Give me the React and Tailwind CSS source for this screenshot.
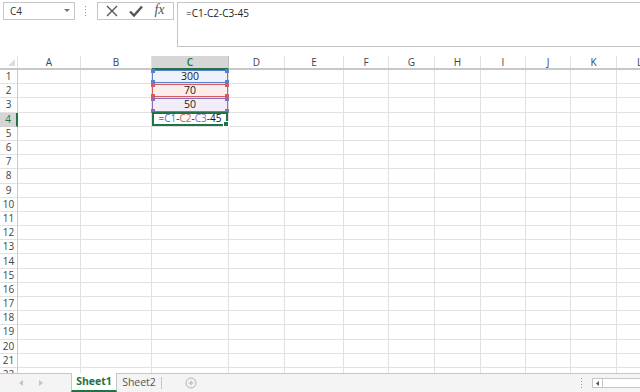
import React from "react";

const COLS = [
  { l: "A", w: 63 },
  { l: "B", w: 71 },
  { l: "C", w: 77 },
  { l: "D", w: 56 },
  { l: "E", w: 59 },
  { l: "F", w: 45 },
  { l: "G", w: 46 },
  { l: "H", w: 46 },
  { l: "I", w: 45 },
  { l: "J", w: 45 },
  { l: "K", w: 46 },
  { l: "L", w: 46 },
];

const ROWS = Array.from({ length: 22 }, (_, i) => i + 1);

const font = { fontFamily: '"Open Sans", "Liberation Sans", sans-serif' };

// coloured reference range on a cell, with small squares at the corners
const RefBox = ({ color, fill, children }) => (
  <div
    className="relative h-full w-full flex items-center justify-center border"
    style={{ borderColor: color, background: fill }}
  >
    {children}
    <span className="absolute -left-[2px] -top-[2px] w-[4px] h-[4px]" style={{ background: color }} />
    <span className="absolute -right-[2px] -top-[2px] w-[4px] h-[4px]" style={{ background: color }} />
    <span className="absolute -left-[2px] -bottom-[2px] w-[4px] h-[4px]" style={{ background: color }} />
    <span className="absolute -right-[2px] -bottom-[2px] w-[4px] h-[4px]" style={{ background: color }} />
  </div>
);

const CellContent = ({ r, c }) => {
  if (c !== "C") return null;
  if (r === 1)
    return (
      <RefBox color="#5b7fd0" fill="#eef2fb">
        300
      </RefBox>
    );
  if (r === 2)
    return (
      <RefBox color="#d55c5c" fill="#fcecec">
        70
      </RefBox>
    );
  if (r === 3)
    return (
      <RefBox color="#8d6bbd" fill="#f2eef8">
        50
      </RefBox>
    );
  if (r === 4)
    return (
      <div className="relative h-[calc(100%+1px)] w-full flex items-center justify-center border-2 border-[#217346] -mt-[1px] text-[10px] text-[#111]">
        <span>=</span>
        <span className="text-[#4a72c9]">C1</span>
        <span>-</span>
        <span className="text-[#cf5b5b]">C2</span>
        <span>-</span>
        <span className="text-[#8b69bb]">C3</span>
        <span>-45</span>
        <span className="absolute -right-[3px] -bottom-[3px] w-[4px] h-[4px] bg-[#217346] border border-white box-content" />
      </div>
    );
  return null;
};

export default function App() {
  return (
    <div className="w-[640px] h-[392px] bg-white flex flex-col overflow-hidden text-[#222]" style={font}>
      {/* formula bar area */}
      <div className="h-[56px] flex items-start shrink-0">
        <div className="mt-[2px] ml-[3px] w-[72px] h-[18px] border border-[#c6c6c6] flex items-center justify-between pl-[6px] pr-[4px] text-[10px] text-[#333]">
          <span>C4</span>
          <svg width="6" height="4" viewBox="0 0 6 4">
            <path d="M0 0 L6 0 L3 3 Z" fill="#777" />
          </svg>
        </div>
        <div className="ml-[10px] mt-[6px] flex flex-col gap-[2px]">
          <span className="w-[1px] h-[1px] bg-[#999]" />
          <span className="w-[1px] h-[1px] bg-[#999]" />
          <span className="w-[1px] h-[1px] bg-[#999]" />
          <span className="w-[1px] h-[1px] bg-[#999]" />
        </div>
        <div className="mt-[2px] ml-[11px] w-[77px] h-[18px] border border-[#c6c6c6] flex items-center justify-around px-[3px]">
          <svg width="12" height="12" viewBox="0 0 12 12">
            <path d="M1 1 L11 11 M11 1 L1 11" stroke="#555" strokeWidth="1.4" />
          </svg>
          <svg width="14" height="12" viewBox="0 0 14 12">
            <path d="M1 6.5 L5 10.5 L13 1.5" stroke="#555" strokeWidth="2.4" fill="none" />
          </svg>
          <span
            className="text-[14px] italic text-[#555] leading-none -mt-[2px]"
            style={{ fontFamily: '"Liberation Serif", serif' }}
          >
            fx
          </span>
        </div>
        <div className="mt-[2px] ml-[3px] flex-1 h-[45px] border border-[#c6c6c6] border-r-0 pl-[8px] pt-[3px] text-[10px] text-[#222]">
          =C1-C2-C3-45
        </div>
      </div>

      {/* grid */}
      <div className="flex-1 overflow-hidden text-[10px]">
        {/* header row */}
        <div className="flex h-[14px] border-b-[2px] border-[#c8c8c8]">
          <div className="w-[18px] shrink-0 flex items-end justify-end pr-[2px] pb-[2px] border-r border-[#e1e1e1]">
            <svg width="7" height="7" viewBox="0 0 7 7">
              <path d="M7 0 L7 7 L0 7 Z" fill="#dcdcdc" />
            </svg>
          </div>
          {COLS.map((c) => (
            <div
              key={c.l}
              className={
                c.l === "C"
                  ? "shrink-0 flex items-center justify-center bg-[#d6d6d6] text-[#217346] font-semibold border-b-[2px] border-[#217346] -mb-[2px] border-r border-r-[#bdbdbd]"
                  : "shrink-0 flex items-center justify-center text-[#444] border-r border-[#e1e1e1]"
              }
              style={{ width: c.w }}
            >
              {c.l}
            </div>
          ))}
        </div>
        {ROWS.map((r) => (
          <div key={r} className="flex h-[14.2px]">
            <div
              className={
                r === 4
                  ? "w-[18px] shrink-0 flex items-center justify-center bg-[#d6d6d6] text-[#217346] border-r-[2px] border-[#217346] border-b border-b-[#d0d0d0]"
                  : "w-[18px] shrink-0 flex items-center justify-center text-[#444] border-r border-[#c8c8c8] border-b border-b-[#e1e1e1]"
              }
            >
              {r}
            </div>
            {COLS.map((c) => (
              <div
                key={c.l}
                className="shrink-0 border-r border-b border-[#e1e1e1] text-[10.5px] text-[#222]"
                style={{ width: c.w }}
              >
                <CellContent r={r} c={c.l} />
              </div>
            ))}
          </div>
        ))}
      </div>

      {/* sheet tabs */}
      <div className="h-[19px] shrink-0 border-t border-[#c6c6c6] bg-[#f4f4f4] flex items-stretch text-[10.5px]">
        <div className="w-[71px] flex items-center gap-[16px] pl-[19px]">
          <svg width="4" height="6" viewBox="0 0 4 6">
            <path d="M4 0 L4 6 L0 3 Z" fill="#c4c4c4" />
          </svg>
          <svg width="4" height="6" viewBox="0 0 4 6">
            <path d="M0 0 L0 6 L4 3 Z" fill="#c4c4c4" />
          </svg>
        </div>
        <div className="w-[46px] -mt-[1px] bg-white border-x border-[#c6c6c6] border-b-[2px] border-b-[#217346] flex items-center justify-center font-bold text-[#217346]">
          Sheet1
        </div>
        <div className="w-[45px] flex items-center justify-center text-[#555] border-r border-[#c6c6c6] my-[3px]">
          Sheet2
        </div>
        <div className="ml-[23px] flex items-center">
          <svg width="12" height="12" viewBox="0 0 12 12">
            <circle cx="6" cy="6" r="5" fill="none" stroke="#b5b5b5" />
            <path d="M6 3.5 V8.5 M3.5 6 H8.5" stroke="#b5b5b5" />
          </svg>
        </div>
        <div className="flex-1" />
        <div className="flex flex-col justify-center gap-[2px] mr-[10px]">
          <span className="w-[1px] h-[1px] bg-[#999]" />
          <span className="w-[1px] h-[1px] bg-[#999]" />
          <span className="w-[1px] h-[1px] bg-[#999]" />
          <span className="w-[1px] h-[1px] bg-[#999]" />
        </div>
        <div className="w-[48px] my-[4px] bg-white border border-[#c6c6c6] border-r-0 flex items-center">
          <div className="w-[10px] h-full border-r border-[#c6c6c6] flex items-center justify-center">
            <svg width="3" height="5" viewBox="0 0 3 5">
              <path d="M3 0 L3 5 L0 2.5 Z" fill="#555" />
            </svg>
          </div>
        </div>
      </div>
    </div>
  );
}
